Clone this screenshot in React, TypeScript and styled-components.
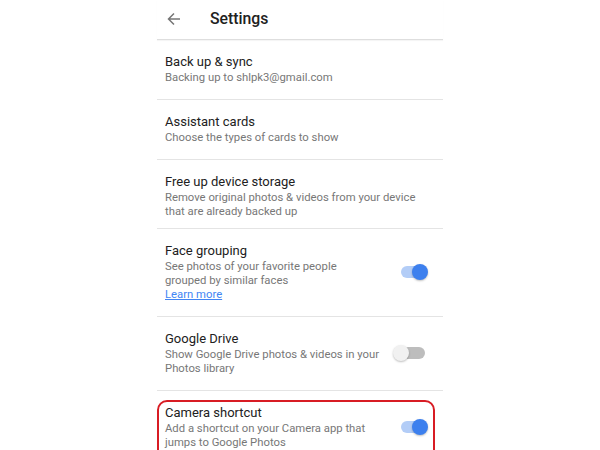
import React from "react";
import styled, { createGlobalStyle } from "styled-components";

const Global = createGlobalStyle`
  html, body { margin: 0; padding: 0; background: #ffffff; }
  body { font-family: Roboto, "Noto Sans", Arial, sans-serif; }
`;

const Page = styled.div`
  width: 600px;
  height: 450px;
  overflow: hidden;
  display: flex;
  justify-content: center;
  align-items: flex-start;
  background: #fff;
`;

const Column = styled.div`
  width: 286px;
  display: flex;
  flex-direction: column;
`;

const Header = styled.div`
  flex: none;
  height: 39px;
  display: flex;
  align-items: center;
  border-bottom: 1px solid #dedede;
  box-shadow: 0 1px 1px rgba(0, 0, 0, 0.04);
  padding-left: 10px;
`;

const BackButton = styled.div`
  width: 14px;
  height: 14px;
  display: flex;
  align-items: center;
  justify-content: center;
  margin-right: 29px;
  margin-top: -2px;
`;

const HeaderTitle = styled.div`
  font-size: 15.8px;
  font-weight: 500;
  color: #212121;
  margin-top: -3px;
`;

const Row = styled.div<{ $last?: boolean; $tight?: boolean }>`
  flex: none;
  position: relative;
  display: flex;
  align-items: center;
  padding: 13px 15px ${(p) => (p.$tight ? "9px" : "14px")} 8px;
  border-bottom: ${(p) => (p.$last ? "none" : "1px solid #e4e4e4")};
`;

const Texts = styled.div`
  flex: 1;
  display: flex;
  flex-direction: column;
`;

const Title = styled.div`
  font-size: 13px;
  line-height: 18px;
  color: #212121;
`;

const Sub = styled.div`
  font-size: 11.3px;
  line-height: 14px;
  color: #777777;
  white-space: nowrap;
`;

const Link = styled.a`
  align-self: flex-start;
  font-size: 11.3px;
  line-height: 14px;
  color: #4285f4;
  text-decoration: underline;
`;

const Toggle = styled.div<{ $on: boolean }>`
  position: relative;
  width: 28px;
  height: 18px;
  flex: none;
  margin-left: 12px;
  &::before {
    content: "";
    position: absolute;
    left: 1px;
    right: 3px;
    top: 3px;
    height: 12px;
    border-radius: 6px;
    background: ${(p) => (p.$on ? "#b3cdf7" : "#bdbdbd")};
  }
  &::after {
    content: "";
    position: absolute;
    top: 1px;
    ${(p) => (p.$on ? "right: 0;" : "left: -7px;")}
    width: 16px;
    height: 16px;
    border-radius: 50%;
    background: ${(p) => (p.$on ? "#3d80ee" : "#f1f1f1")};
    box-shadow: 0 1px 2px rgba(0, 0, 0, 0.25);
  }
`;

const Highlight = styled.div`
  position: absolute;
  left: 0;
  right: 8px;
  top: 9px;
  bottom: -12px;
  border: 2px solid #d81c24;
  border-radius: 10px;
  pointer-events: none;
`;

type Item = {
  title: string;
  sub: string[];
  link?: string;
  toggle?: boolean;
  highlight?: boolean;
  tight?: boolean;
};

const items: Item[] = [
  { title: "Back up & sync", sub: ["Backing up to shlpk3@gmail.com"] },
  { title: "Assistant cards", sub: ["Choose the types of cards to show"] },
  {
    title: "Free up device storage",
    sub: ["Remove original photos & videos from your device", "that are already backed up"],
    tight: true,
  },
  {
    title: "Face grouping",
    sub: ["See photos of your favorite people", "grouped by similar faces"],
    link: "Learn more",
    toggle: true,
  },
  {
    title: "Google Drive",
    sub: ["Show Google Drive photos & videos in your", "Photos library"],
    toggle: false,
  },
  {
    title: "Camera shortcut",
    sub: ["Add a shortcut on your Camera app that", "jumps to Google Photos"],
    toggle: true,
    highlight: true,
  },
];

export default function App() {
  return (
    <>
      <Global />
      <Page>
        <Column>
          <Header>
            <BackButton>
              <svg width="14" height="14" viewBox="0 0 14 14" fill="none">
                <path d="M13 7H1.5M7 1.5L1.5 7L7 12.5" stroke="#757575" strokeWidth="1.5" />
              </svg>
            </BackButton>
            <HeaderTitle>Settings</HeaderTitle>
          </Header>
          {items.map((it, i) => (
            <Row key={it.title} $last={i === items.length - 1} $tight={it.tight}>
              <Texts>
                <Title>{it.title}</Title>
                {it.sub.map((s) => (
                  <Sub key={s}>{s}</Sub>
                ))}
                {it.link && <Link>{it.link}</Link>}
              </Texts>
              {it.toggle !== undefined && <Toggle $on={it.toggle} />}
              {it.highlight && <Highlight />}
            </Row>
          ))}
        </Column>
      </Page>
    </>
  );
}
